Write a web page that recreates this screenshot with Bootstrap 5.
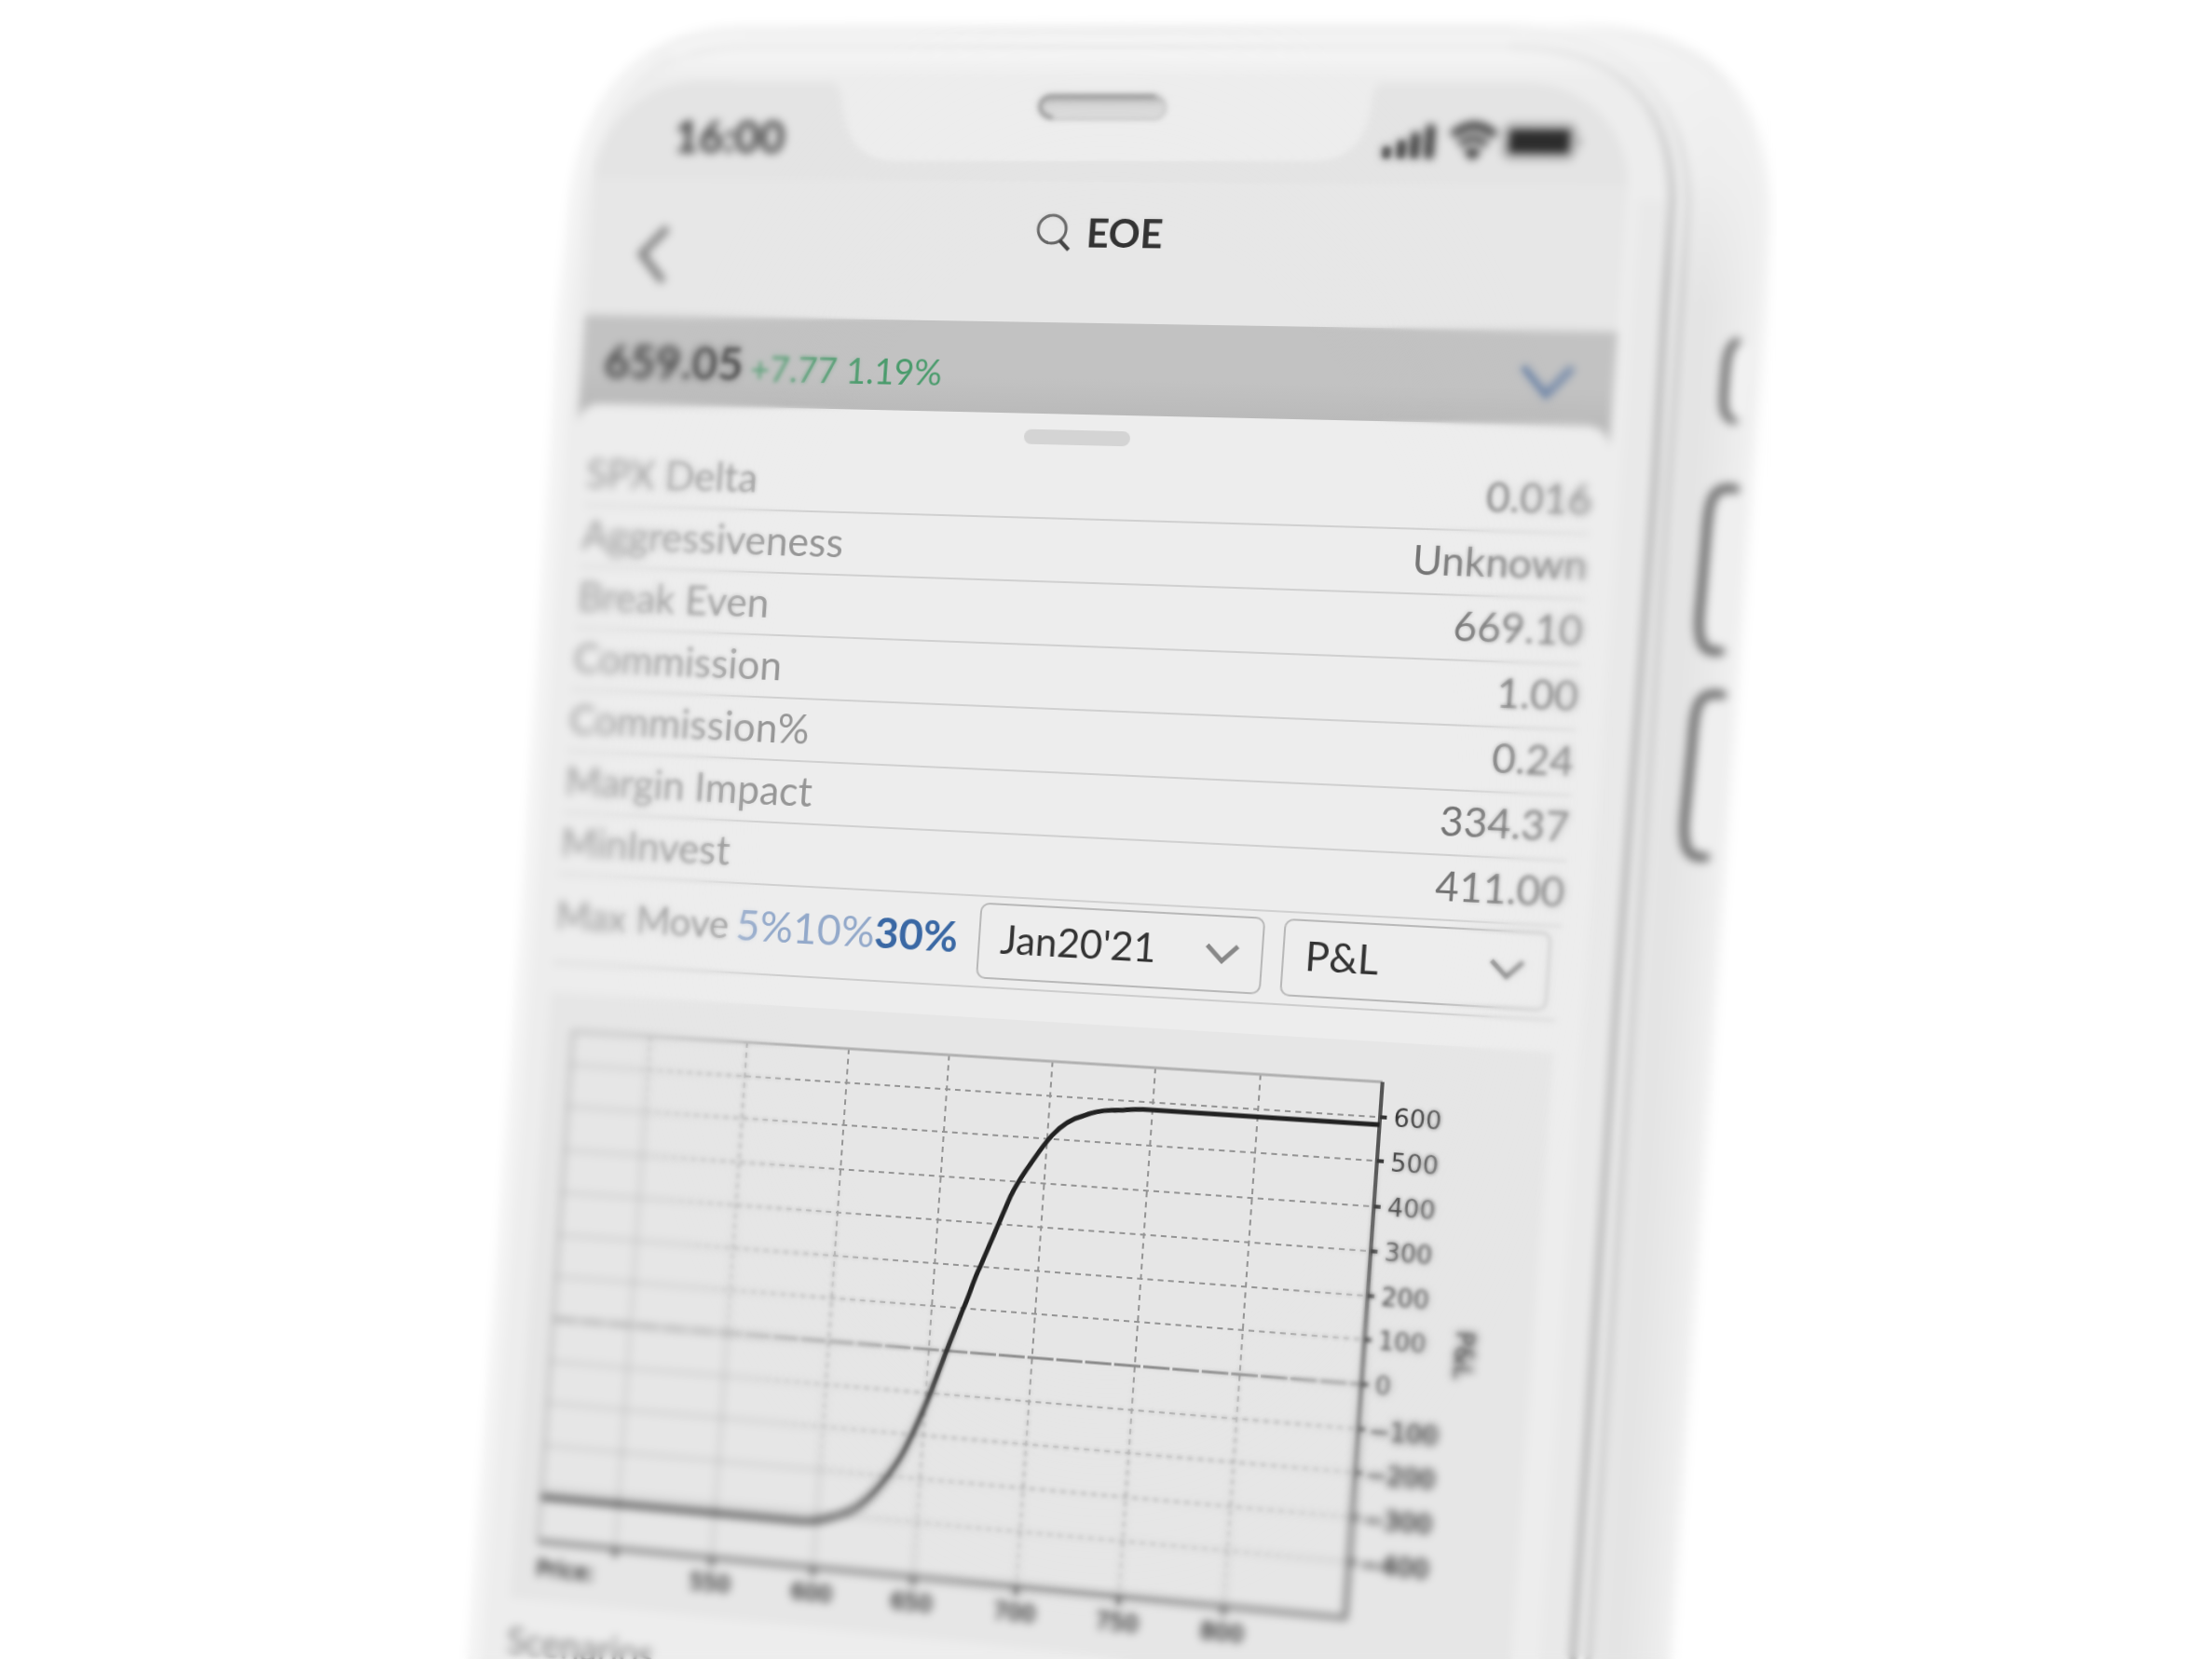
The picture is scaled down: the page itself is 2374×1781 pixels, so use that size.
<!DOCTYPE html>
<html lang="en">
<head>
<meta charset="utf-8">
<meta name="viewport" content="width=device-width, initial-scale=1">
<title>EOE</title>
<link href="https://cdn.jsdelivr.net/npm/bootstrap@5.3.0/dist/css/bootstrap.min.css" rel="stylesheet">
<style>
  body { font-family: Lato, "Open Sans", sans-serif; background: #fff; color: #333; }
  .plain-btn { background: none; border: 0; padding: 0; line-height: 1; }
  .phone { width: 1440px; height: 100vh; flex: none; }
  .phone-art { inset: 0 auto auto 0; width: 1440px; height: 1781px; pointer-events: none; }

  /* the flat screen, tilted back once as a whole */
  .app-screen {
    width: 1108px;
    transform-origin: 0 0;
    transform: matrix3d(.929972, -.003255, 0, -.0000557741, -.066008, .971744, 0, .0000013562, 0, 0, 1, 0, 160, 542, 0, 1) translate(-14px, -468px);
    border-radius: 110px 110px 0 0;
    overflow: hidden;
    background: #ededed;
  }
  .status-strip { height: 107px; background: #e4e4e4; padding: 24px 46px 0 88px; }
  .clock { font-size: 48px; line-height: 72px; font-weight: 700; color: #333; }
  .app-header { height: 151px; background: #e7e7e7; padding: 0 52px; }
  .back-btn { width: 40px; margin-top: 51px; }
  .ticker { font-size: 42px; line-height: 52px; font-weight: 700; color: #333; margin-top: 28px; padding-left: 18px; }
  .quote-strip { height: 128px; background: linear-gradient(#c2c2c2 60px, #bababa 98px); padding: 0 40px 28px 26px; }
  .quote-last { font-size: 50px; font-weight: 700; color: #383838; }
  .quote-change { font-size: 38px; color: #4a9b6c; padding-top: 10px; }
  .quote-toggle { padding-top: 8px; }
  .bottom-sheet { margin-top: -30px; background: #ededed; border-radius: 24px 24px 0 0; padding: 17px 14px 0; height: 1520px; position: relative; }
  .grabber { width: 114px; height: 16px; border-radius: 8px; background: #d4d4d4; margin: 0 auto 11px; }
  .figures { width: 100%; border-collapse: collapse; font-size: 44px; line-height: 60px; }
  .figures tr { height: 68px; border-bottom: 2px solid #d0d0d0; }
  .figures th { font-weight: 400; color: #969696; padding: 0 0 4px; }
  .figures td { font-size: 42px; color: #757575; text-align: right; padding: 0 0 4px; }
  .controls { height: 98px; border-bottom: 2px solid #cdcdcd; font-size: 42px; padding: 0 10px 3px 0; }
  .move-label { color: #969696; padding-bottom: 4px; }
  .move-btn { color: #93a9ca; font-size: 46px; padding-bottom: 6px; }
  .move-btn.chosen { color: #3a68a4; font-weight: 700; }
  .picker {
    height: 82px; font-size: 42px; color: #333; padding: 0 0 4px 22px; border: 2px solid #b8b8b8; border-radius: 10px;
    background: #ededed url("data:image/svg+xml,%3Csvg xmlns='http://www.w3.org/2000/svg' viewBox='0 0 40 24'%3E%3Cpath d='M3 3l17 17L37 3' fill='none' stroke='%23888' stroke-width='5'/%3E%3C/svg%3E") no-repeat right 22px center / 38px 24px;
  }
  .picker-date { width: 304px; margin-right: 20px; }
  .picker-value { width: 275px; }
  .chart-panel { margin-top: 32px; background: #e6e6e6; }
  .chart-panel text { font-family: "DejaVu Sans", sans-serif; fill: #333; }
  .scenarios { font-size: 40px; line-height: 60px; color: #808080; margin-top: 16px; }

  /* depth of field: sharp in the middle, soft towards the rim */
  .lens { inset: 0; pointer-events: none; }
  .lens-near { backdrop-filter: blur(2px); -webkit-mask-image: radial-gradient(380px 620px at 723px 850px, transparent 98%, #000 118%); mask-image: radial-gradient(380px 620px at 723px 850px, transparent 98%, #000 118%); }
  .lens-far { backdrop-filter: blur(4px); -webkit-mask-image: radial-gradient(380px 620px at 723px 850px, transparent 112%, #000 144%); mask-image: radial-gradient(380px 620px at 723px 850px, transparent 112%, #000 144%); }
</style>
</head>
<body>
<div class="d-flex justify-content-center overflow-hidden vh-100">
<main class="phone position-relative overflow-hidden">

  <svg class="phone-art position-absolute" viewBox="467 0 1440 1781" aria-hidden="true">
    <defs>
      <linearGradient id="side" gradientUnits="userSpaceOnUse" x1="1775" y1="520" x2="1885" y2="527">
        <stop offset="0" stop-color="#e9e9e9"/><stop offset=".35" stop-color="#e3e3e3"/><stop offset=".65" stop-color="#e9e9e9"/><stop offset="1" stop-color="#f3f3f3"/>
      </linearGradient>
      <linearGradient id="topfade" x1="0" y1="0" x2="0" y2="1">
        <stop offset="0" stop-color="#f6f6f6"/><stop offset=".02" stop-color="#ededed"/><stop offset="1" stop-color="#ededed"/>
      </linearGradient>
      <linearGradient id="capfade" gradientUnits="userSpaceOnUse" x1="0" y1="20" x2="0" y2="330">
        <stop offset="0" stop-color="#f3f3f3"/><stop offset=".5" stop-color="#f1f1f1" stop-opacity=".8"/><stop offset="1" stop-color="#eee" stop-opacity="0"/>
      </linearGradient>
      <linearGradient id="groove" gradientUnits="userSpaceOnUse" x1="0" y1="50" x2="0" y2="300">
        <stop offset="0" stop-color="#e8e8e8"/><stop offset=".4" stop-color="#d0d0d0"/><stop offset="1" stop-color="#b8b8b8"/>
      </linearGradient>
      <linearGradient id="groove2" gradientUnits="userSpaceOnUse" x1="0" y1="50" x2="0" y2="300">
        <stop offset="0" stop-color="#eee"/><stop offset=".4" stop-color="#dedede"/><stop offset="1" stop-color="#cbcbcb"/>
      </linearGradient>
      <filter id="b2"><feGaussianBlur stdDeviation="1.5"/></filter>
      <filter id="b4" x="-20%" y="-5%" width="140%" height="110%"><feGaussianBlur stdDeviation="4"/></filter>
    </defs>
    <g filter="url(#b4)">
      <path d="M503 1800L533 1398L561 1000L591 520L602 333L612 233C622 110 680 30 800 30L1240 28H1700C1840 28 1900 110 1900 230L1896 333L1881 520L1844 1040L1792 1800Z" fill="url(#side)"/>
      <path d="M1650 28C1840 28 1900 110 1900 230L1894 350H1800L1796 210C1792 110 1740 50 1620 34Z" fill="url(#capfade)"/>
    </g>
    <path d="M512 1800L570 1000L609 333L622 233C632 120 690 52 800 52H1620C1740 52 1795 110 1795 215L1787 333L1776 520L1735 1080L1686 1800Z" fill="url(#topfade)"/>
    <g fill="none" filter="url(#b2)">
      <path d="M509 1800L567 1000L598 520L608 333L618 233C630 110 690 40 800 36" stroke="#f3f3f3" stroke-width="12"/>
      <path d="M700 62C730 42 760 36 800 36H1640" stroke="#f0f0f0" stroke-width="5"/>
      <path d="M720 58C750 48 770 43 810 43H1620C1750 43 1803 115 1803 215L1796 333L1783 520L1744 1080L1696 1800" stroke="#f6f6f6" stroke-width="8"/>
      <path d="M740 58C770 50 790 50 810 50H1620" stroke="#e9e9e9" stroke-width="6"/>
      <path d="M1772 215L1764 333L1752 520L1712 1080L1664 1800" stroke="#e9e9e9" stroke-width="26"/>
      <path d="M1620 50C1740 50 1795 112 1795 215L1787 333L1776 520L1735 1080L1687 1800" stroke="url(#groove)" stroke-width="9"/>
      <path d="M1640 36C1755 42 1811 118 1811 218L1803 333L1790 520L1752 1080L1703 1800" stroke="url(#groove2)" stroke-width="8"/>
    </g>
    <g filter="url(#b2)" stroke-linecap="round">
      <path d="M1864 367C1853 372 1852 392 1850 425C1849 444 1853 449 1861 451" fill="none" stroke="#6c6c6c" stroke-width="9"/>
      <path d="M1868 368Q1860 376 1857 425Q1856 446 1864 450L1872 446L1878 372Z" fill="#f2f2f2"/>
      <path d="M1862 525C1836 520 1834 540 1831 580L1824 660C1822 690 1827 701 1846 699" fill="none" stroke="#6a6a6a" stroke-width="10"/>
      <path d="M1854 530H1862Q1874 534 1873 550L1861 682Q1857 695 1846 694Q1829 691 1831 665L1840 548Q1842 532 1854 530Z" fill="#efefef"/>
      <path d="M1848 746C1821 741 1819 760 1816 800L1808 880C1806 911 1811 922 1830 920" fill="none" stroke="#6a6a6a" stroke-width="10"/>
      <path d="M1840 751H1848Q1860 755 1859 771L1846 903Q1842 916 1831 915Q1813 912 1815 886L1825 769Q1828 753 1840 751Z" fill="#efefef"/>
    </g>
  </svg>

  <div class="app-screen">
    <div class="status-strip d-flex justify-content-between">
      <span class="clock">16:00</span>
      <svg width="210" height="72" viewBox="0 0 210 72" aria-label="Signal, Wi-Fi and battery">
        <g fill="#2c2c2c">
          <rect x="3" y="43" width="9" height="13" rx="3"/><rect x="18" y="36" width="9" height="20" rx="3"/><rect x="32" y="28" width="9" height="28" rx="3"/><rect x="47" y="20" width="9" height="36" rx="3"/>
          <rect x="132" y="24" width="63" height="26" rx="3"/>
        </g>
        <rect x="127" y="19" width="73" height="36" rx="9" fill="none" stroke="#999" stroke-width="3"/>
        <path d="M203 32q6 5 0 11z" fill="#888"/>
        <path d="M74 31Q96 11 118 31" fill="none" stroke="#444" stroke-width="9"/>
        <path d="M82 41Q96 28 110 41" fill="none" stroke="#444" stroke-width="7"/>
        <path d="M96 57L87 48Q96 41 105 48Z" fill="#222"/>
      </svg>
    </div>
    <header class="app-header d-flex justify-content-between align-items-start">
      <button class="plain-btn back-btn" type="button" aria-label="Back">
        <svg width="36" height="64" viewBox="0 0 36 64"><path d="M33 3L6 32L32 62" fill="none" stroke="#7a7a7a" stroke-width="8"/></svg>
      </button>
      <button class="plain-btn ticker d-flex align-items-center gap-3" type="button">
        <svg width="38" height="42" viewBox="0 0 38 42"><ellipse cx="17" cy="18" rx="15" ry="15" fill="none" stroke="#666" stroke-width="3"/><path d="M26 30L36 40" stroke="#444" stroke-width="4"/></svg>
        <span>EOE</span>
      </button>
      <span class="back-btn"></span>
    </header>
    <div class="quote-strip d-flex align-items-center">
      <span class="quote-last">659.05</span>
      <span class="quote-change ms-2">+7.77 1.19%</span>
      <button class="plain-btn quote-toggle ms-auto" type="button" aria-label="Show quote details">
        <svg width="56" height="38" viewBox="0 0 56 38"><path d="M3 3L28 32L53 3" fill="none" stroke="#6a82a6" stroke-width="7"/></svg>
      </button>
    </div>
    <section class="bottom-sheet">
      <div class="grabber"></div>
      <table class="figures">
        <tbody>
          <tr><th scope="row">SPX Delta</th><td>0.016</td></tr>
          <tr><th scope="row">Aggressiveness</th><td>Unknown</td></tr>
          <tr><th scope="row">Break Even</th><td>669.10</td></tr>
          <tr><th scope="row">Commission</th><td>1.00</td></tr>
          <tr><th scope="row">Commission%</th><td>0.24</td></tr>
          <tr><th scope="row">Margin Impact</th><td>334.37</td></tr>
          <tr><th scope="row">MinInvest</th><td>411.00</td></tr>
        </tbody>
      </table>
      <div class="controls d-flex align-items-center">
        <span class="move-label me-2">Max Move</span>
        <button class="plain-btn move-btn" type="button">5%</button>
        <button class="plain-btn move-btn" type="button">10%</button>
        <button class="plain-btn move-btn chosen" type="button" aria-pressed="true">30%</button>
        <select class="form-select picker picker-date ms-auto" aria-label="Expiry date"><option>Jan20'21</option></select>
        <select class="form-select picker picker-value" aria-label="Chart value"><option>P&amp;L</option></select>
      </div>
      <div class="chart-panel">
        <svg class="d-block w-100" viewBox="0 0 1080 671" role="img" aria-label="P&amp;L by price">
          <g fill="none" stroke="#949494" stroke-width="2" stroke-dasharray="6 5">
            <path d="M28 79H908M28 125H908M28 173H908M28 220H908M28 267H908M28 313H908M28 407H908M28 453H908M28 500H908M28 547H908"/>
            <path d="M116 42V606M225 42V606M338 42V606M448 42V606M560 42V606M670 42V606M781 42V606"/>
          </g>
          <path d="M28 360H908" stroke="#888" stroke-width="3" stroke-dasharray="28 3"/>
          <path d="M28 606V42H908" fill="none" stroke="#b0b0b0" stroke-width="3"/>
          <path d="M908 42V606" stroke="#555" stroke-width="4"/>
          <path d="M28 606H910" stroke="#777" stroke-width="5"/>
          <path d="M908 79h7M908 125h7M908 173h7M908 220h7M908 267h7M908 313h7M908 360h7M908 407h7M908 453h7M908 500h7M908 547h7M116 606v9M225 606v9M338 606v9M448 606v9M560 606v9M670 606v9M781 606v9" stroke="#333" stroke-width="4"/>
          <path d="M28 557H320C332 557 342 555 352 551C363 547 372 543 381 537C398 523 412 503 425 479C436 457 444 433 452 410L467 361L482 314C488 299 491 282 497 268L525 189C530 177 535 168 541 158C549 145 556 132 565 121C574 110 584 102 597 98C607 93 617 91 627 90C640 90 646 87 660 87H908" fill="none" stroke="#222" stroke-width="5"/>
          <g font-size="26">
            <text x="922" y="88">600</text><text x="922" y="135">500</text><text x="922" y="182">400</text><text x="922" y="229">300</text><text x="922" y="276">200</text><text x="922" y="322">100</text><text x="922" y="369">0</text>
            <g stroke="#333" stroke-width="1"><text x="919" y="417">−100</text><text x="919" y="463">−200</text><text x="919" y="510">−300</text><text x="919" y="557">−400</text>
            <text transform="translate(1002 296) rotate(90)">P&amp;L</text></g>
          </g>
          <g font-size="24" text-anchor="middle" stroke="#333" stroke-width="1">
            <text x="225" y="642">550</text><text x="338" y="642">600</text><text x="448" y="642">650</text><text x="560" y="642">700</text><text x="670" y="642">750</text><text x="781" y="642">800</text>
            <text x="28" y="644" text-anchor="start">Price:</text>
          </g>
        </svg>
      </div>
      <div class="scenarios">Scenarios</div>
    </section>
  </div>

  <svg class="phone-art position-absolute" viewBox="467 0 1440 1781" aria-hidden="true">
    <defs><linearGradient id="spk" x1="0" y1="0" x2="0" y2="1"><stop offset="0" stop-color="#a0a0a0"/><stop offset=".4" stop-color="#d6d6d6"/><stop offset="1" stop-color="#dedede"/></linearGradient></defs>
    <path d="M880 80Q902 86 904 108C908 150 922 173 965 173H1405C1450 174 1468 148 1472 108Q1475 86 1496 80Z" fill="#ededed"/>
    <g filter="url(#b2)">
      <rect x="1115" y="102" width="136" height="26" rx="13" fill="url(#spk)" stroke="#c4c4c4" stroke-width="3"/>
      <path d="M1130 126C1112 124 1112 104 1130 103H1240" fill="none" stroke="#8c8c8c" stroke-width="4"/>
    </g>
  </svg>

  <div class="lens lens-near position-absolute"></div>
  <div class="lens lens-far position-absolute"></div>
</main>
</div>
<script src="https://cdn.jsdelivr.net/npm/bootstrap@5.3.0/dist/js/bootstrap.bundle.min.js"></script>
</body>
</html>
